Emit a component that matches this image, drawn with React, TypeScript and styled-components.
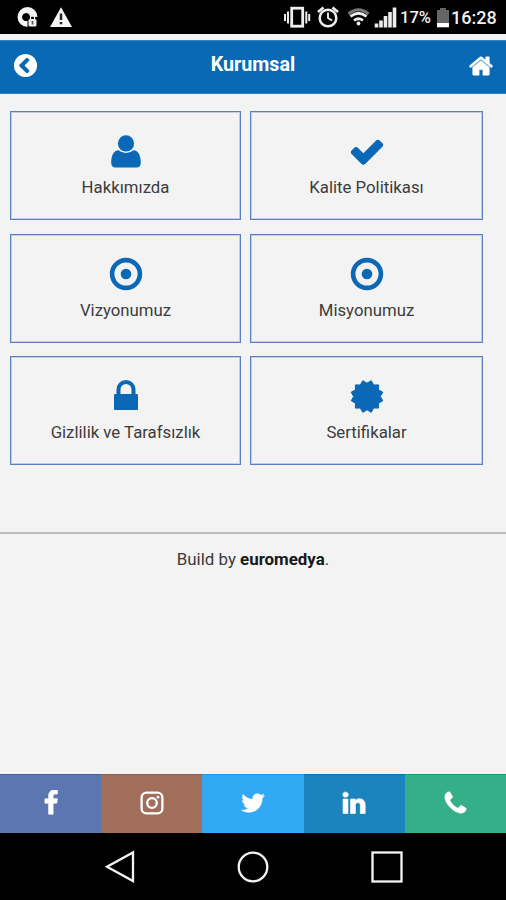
import React from 'react';
import styled, { createGlobalStyle } from 'styled-components';

const GlobalStyle = createGlobalStyle`
  * { box-sizing: border-box; }
  body { margin: 0; background: #f3f3f3; }
`;

const Screen = styled.div`
  width: 506px;
  height: 900px;
  display: flex;
  flex-direction: column;
  overflow: hidden;
  background: #f3f3f3;
  color: #3a3a3a;
  font-family: Roboto, sans-serif;
`;

const StatusBar = styled.div`
  height: 34px;
  flex: none;
  display: flex;
  justify-content: space-between;
  background: #000;
  color: #f0f0f0;
`;

const StatusGroup = styled.div`
  display: flex;
  align-items: flex-start;
`;

const StatusText = styled.span<{ $size: number; $width: number }>`
  width: ${p => p.$width}px;
  font-size: ${p => p.$size}px;
  font-weight: 500;
  line-height: 36px;
  white-space: nowrap;
`;

const Header = styled.header`
  height: 54px;
  margin-top: 6px;
  flex: none;
  display: grid;
  grid-template-columns: 51px 1fr 51px;
  align-items: center;
  justify-items: center;
  padding-bottom: 3px;
  background: #0969b5;
  border-top: 1px solid #3f83bb;
  border-bottom: 1px solid #3f7db5;
  color: #fff;
`;

const Title = styled.h1`
  margin: 0;
  padding-bottom: 2px;
  font-size: 19.7px;
  line-height: 24px;
  font-weight: 700;
`;

const Tiles = styled.main`
  display: grid;
  grid-template-columns: 231px 233px;
  grid-auto-rows: 109px;
  gap: 13.5px 9px;
  padding: 17px 0 0 10px;
  flex: none;
  height: 438px;
`;

const Tile = styled.button`
  display: flex;
  flex-direction: column;
  align-items: center;
  padding: 19px 0 0;
  border: 1px solid #5a80bd;
  box-shadow: inset 0 0 0 1px #c3cce4;
  background: #f3f3f3;
  font-family: inherit;
  color: #3c3c3c;
  svg { color: #0a68b6; }
`;

const Label = styled.span`
  margin-top: 6px;
  font-size: 16.75px;
  line-height: 20px;
`;

const Footer = styled.footer`
  flex: 1;
  border-top: 2px solid #bcbcbc;
  padding-top: 12.5px;
  text-align: center;
  font-size: 16.9px;
  line-height: 24px;
  b { color: #181818; }
`;

const SocialBar = styled.nav`
  height: 59px;
  flex: none;
  display: grid;
  grid-template-columns: repeat(5, 1fr);
`;

const SocialLink = styled.a<{ $color: string; $edge: string }>`
  display: flex;
  align-items: center;
  justify-content: center;
  padding-bottom: 2px;
  background: ${p => p.$color};
  border-top: 1px solid ${p => p.$edge};
  color: #fff;
`;

const NavBar = styled.div`
  height: 67px;
  flex: none;
  display: flex;
  justify-content: center;
  align-items: center;
  gap: 102px;
  background: #000;
`;

const paths = {
  back: 'M1037 1395l102-102q19-19 19-45t-19-45l-307-307 307-307q19-19 19-45t-19-45l-102-102q-19-19-45-19t-45 19l-454 454q-19 19-19 45t19 45l454 454q19 19 45 19t45-19zm627-499q0 209-103 385.5t-279.5 279.5-385.5 103-385.5-103-279.5-279.5-103-385.5 103-385.5 279.5-279.5 385.5-103 385.5 103 279.5 279.5 103 385.5z',
  home: 'M1472 992v480q0 26-19 45t-45 19h-384v-384h-256v384h-384q-26 0-45-19t-19-45v-480q0-1 .5-3t.5-3l575-474 575 474q1 2 1 6zm223-69l-62 74q-8 9-21 11h-3q-13 0-21-7l-692-577-692 577q-12 8-24 7-13-2-21-11l-62-74q-8-10-7-23.5t11-21.5l719-599q32-26 76-26t76 26l244 204v-195q0-14 9-23t23-9h192q14 0 23 9t9 23v408l219 182q10 8 11 21.5t-7 23.5z',
  check: 'M1671 566q0 40-28 68l-724 724-136 136q-28 28-68 28t-68-28l-136-136-362-362q-28-28-28-68t28-68l136-136q28-28 68-28t68 28l294 295 656-657q28-28 68-28t68 28l136 136q28 28 28 68z',
  facebook: 'M1343 12v264h-157q-86 0-116 36t-30 108v189h293l-39 296h-254v759h-306v-759h-255v-296h255v-218q0-186 104-288.5t277-102.5q147 0 228 12z',
  twitter: 'M1684 408q-67 98-162 167 1 14 1 42 0 130-38 259.5t-115.5 248.5-184.5 210.5-258 146-323 54.5q-271 0-496-145 35 4 78 4 225 0 401-138-105-2-188-64.5t-114-159.5q33 5 61 5 43 0 85-11-112-23-185.5-111.5t-73.5-205.5v-4q68 38 146 41-66-44-105-115t-39-154q0-88 44-163 121 149 294.5 238.5t371.5 99.5q-8-38-8-74 0-134 94.5-228.5t228.5-94.5q140 0 236 102 109-21 205-78-37 115-142 178 93-10 186-50z',
  linkedin: 'M477 625v991h-330v-991h330zm21-306q1 73-50.5 122t-135.5 49h-2q-82 0-132-49t-50-122q0-74 51.5-122.5t134.5-48.5 133 48.5 51 122.5zm1166 729v568h-329v-530q0-105-40.5-164.5t-126.5-59.5q-63 0-105.5 34.5t-63.5 85.5q-11 30-11 81v553h-329q2-399 2-647t-1-296l-1-48h329v144h-2q20-32 41-56t56.5-52 87-43.5 114.5-15.5q171 0 275 113.5t104 332.5z',
  phone: 'M1600 1240q0 27-10 70.5t-21 68.5q-21 50-122 106-94 51-186 51-27 0-53-3.5t-57.5-12.5-47-14.5-55.5-20.5-49-18q-98-35-175-83-127-79-264-216t-216-264q-48-77-83-175-3-9-18-49t-20.5-55.5-14.5-47-12.5-57.5-3.5-53q0-92 51-186 56-101 106-122 25-11 68.5-21t70.5-10q14 0 21 3 18 6 53 76 11 19 30 54t35 63.5 31 53.5q3 4 17.5 25t21.5 35.5 7 28.5q0 20-28.5 50t-62 55-62 53-28.5 46q0 9 5 22.5t8.5 20.5 14 24 11.5 19q76 137 174 235t235 174q2 1 19 11.5t24 14 20.5 8.5 22.5 5q18 0 46-28.5t53-62 55-62 50-28.5q14 0 28.5 7t35.5 21.5 25 17.5q25 15 53.5 31t63.5 35 54 30q70 35 76 53 3 7 3 21z',
};

const Glyph = ({ name, size, weight = 0 }: { name: keyof typeof paths; size: number; weight?: number }) => (
  <svg width={size} height={size} viewBox="0 0 1792 1792" fill="currentColor" stroke="currentColor" strokeWidth={weight}>
    <path d={paths[name]} />
  </svg>
);

const UserIcon = () => (
  <svg width="36" height="40" viewBox="0 0 36 40" fill="currentColor">
    <circle cx="18" cy="12.4" r="8.1" />
    <path d="M10.5 19.200Q14 22 18 22T25.500 19.200C30.500 19.200 32.800 25 32.800 31.500Q32.800 36.500 28.500 36.500H7.500Q3.200 36.500 3.200 31.500C3.200 25 5.500 19.200 10.500 19.200Z" />
  </svg>
);

const CheckIcon = () => (
  <svg width="36" height="40" viewBox="0 0 1792 1991" fill="currentColor" stroke="currentColor" strokeWidth="60">
    <path transform="translate(0 130)" d={paths.check} />
  </svg>
);

const TargetIcon = () => (
  <svg width="36" height="40" viewBox="0 0 36 40">
    <circle cx="18" cy="20" r="13.900" fill="none" stroke="currentColor" strokeWidth="4.600" />
    <circle cx="18" cy="20" r="5.300" fill="currentColor" />
  </svg>
);

const LockIcon = () => (
  <svg width="36" height="40" viewBox="0 0 36 40">
    <path d="M10.500 20V13.500a7.500 7.500 0 0 1 15 0V20" fill="none" stroke="currentColor" strokeWidth="4" />
    <rect x="6" y="18" width="24" height="16" rx="1" fill="currentColor" />
  </svg>
);

const sealPoints = Array.from({ length: 24 }, (_, i) => {
  const r = i % 2 ? 16.4 : 13.3;
  const a = (i * Math.PI) / 12;
  return `${18 + r * Math.cos(a)},${20.5 + r * Math.sin(a)}`;
}).join(' ');

const SealIcon = () => (
  <svg width="36" height="40" viewBox="0 0 36 40" fill="currentColor" stroke="currentColor" strokeWidth="1" strokeLinejoin="round">
    <polygon points={sealPoints} />
  </svg>
);

const InstagramIcon = () => (
  <svg width="26" height="26" viewBox="0 0 26 26" fill="none" stroke="currentColor" strokeWidth="2.3">
    <rect x="2.600" y="2.600" width="20.800" height="20.800" rx="5" />
    <circle cx="13" cy="13" r="4.800" />
    <circle cx="19" cy="7.200" r="1.400" fill="currentColor" stroke="none" />
  </svg>
);

const NotificationIcons = () => (
  <svg width="90" height="34" viewBox="0 0 90 34">
    <path d="M37.500 17A10 10 0 1 0 27.500 27V21H27A4 4 0 1 1 30 16.500Z" fill="#f4f4f4" />
    <rect x="28.500" y="19" width="8" height="7.500" rx="1.500" fill="#eee" />
    <path d="M30.500 19v-1.500a2 2 0 0 1 4 0V19" fill="none" stroke="#eee" strokeWidth="1.300" />
    <rect x="31.700" y="21" width="1.600" height="3.500" fill="#555" />
    <path d="M61 7.200L72 27H50Z" fill="#f4f4f4" />
    <path d="M61 13.500v6.500M61 22v2.300" stroke="#222" strokeWidth="2.500" />
  </svg>
);

const SystemIcons = () => (
  <svg width="116" height="34" viewBox="284 0 116 34" fill="none" stroke="#eee">
    <rect x="291.700" y="8.200" width="11" height="18" strokeWidth="2.800" />
    <path d="M288 11.500v12M306.300 11.500v12M285 14v7M309.200 14v7" strokeWidth="2" />
    <circle cx="328" cy="18" r="8.300" strokeWidth="2.500" />
    <path d="M328 12.500V18l4 2.500" strokeWidth="1.900" />
    <path d="M318 12l5.500-4.500M338 12l-5.500-4.500" strokeWidth="2.700" />
    <path d="M348.500 14Q358.500 5.500 368.500 14" stroke="#777" strokeWidth="3" />
    <path d="M350.500 16.500Q358.500 10 366.500 16.500M354 20.500Q358.500 17 363 20.500" strokeWidth="2.700" />
    <circle cx="358.500" cy="23.500" r="1.900" fill="#eee" stroke="none" />
    <path d="M376.500 23.500v4M381 20.500v7M385.500 16v11.500M390 12v15.500M394.500 7.500v20" strokeWidth="3.600" />
  </svg>
);

const BatteryIcon = () => (
  <svg width="15" height="34" viewBox="436 0 15 34">
    <path d="M437 10h3V8h6v2h3v14h-12z" fill="#666" />
    <rect x="437" y="23" width="12" height="4.300" fill="#fff" />
  </svg>
);

const NavIcon = ({ children }: { children: React.ReactNode }) => (
  <svg width="32" height="34" viewBox="0 0 32 34" fill="none" stroke="#f4f4f4" strokeWidth="2.300">
    {children}
  </svg>
);

const tiles = [
  { label: 'Hakkımızda', icon: <UserIcon /> },
  { label: 'Kalite Politikası', icon: <CheckIcon /> },
  { label: 'Vizyonumuz', icon: <TargetIcon /> },
  { label: 'Misyonumuz', icon: <TargetIcon /> },
  { label: 'Gizlilik ve Tarafsızlık', icon: <LockIcon /> },
  { label: 'Sertifikalar', icon: <SealIcon /> },
];

const socials = [
  { color: '#5b76b0', edge: '#3c65a8', icon: <Glyph name="facebook" size={26} weight={50} /> },
  { color: '#a06e5b', edge: '#955d49', icon: <InstagramIcon /> },
  { color: '#31a9f3', edge: '#1c9bea', icon: <Glyph name="twitter" size={26} weight={40} /> },
  { color: '#1b84be', edge: '#0871b4', icon: <Glyph name="linkedin" size={26} weight={50} /> },
  { color: '#35af88', edge: '#159b70', icon: <Glyph name="phone" size={27} weight={50} /> },
];

export default function App() {
  return (
    <>
      <GlobalStyle />
      <Screen>
        <StatusBar>
          <StatusGroup><NotificationIcons /></StatusGroup>
          <StatusGroup>
            <SystemIcons />
            <StatusText $size={16.5} $width={36}>17%</StatusText>
            <BatteryIcon />
            <StatusText $size={18} $width={55}>16:28</StatusText>
          </StatusGroup>
        </StatusBar>
        <Header>
          <Glyph name="back" size={27} />
          <Title>Kurumsal</Title>
          <Glyph name="home" size={26} weight={30} />
        </Header>
        <Tiles>
          {tiles.map(t => (
            <Tile key={t.label}>{t.icon}<Label>{t.label}</Label></Tile>
          ))}
        </Tiles>
        <Footer>Build by <b>euromedya</b>.</Footer>
        <SocialBar>
          {socials.map(s => (
            <SocialLink key={s.color} $color={s.color} $edge={s.edge}>{s.icon}</SocialLink>
          ))}
        </SocialBar>
        <NavBar>
          <NavIcon><path d="M30 2.500V31L4 16.800Z" /></NavIcon>
          <NavIcon><circle cx="16" cy="17" r="14.300" /></NavIcon>
          <NavIcon><rect x="1.500" y="2.500" width="29" height="29" /></NavIcon>
        </NavBar>
      </Screen>
    </>
  );
}
